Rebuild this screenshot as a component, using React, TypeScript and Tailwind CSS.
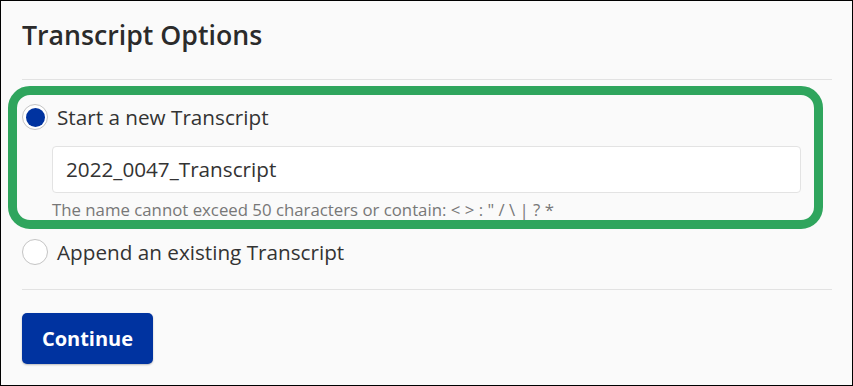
const Radio = ({ checked }: { checked: boolean }) => (
  <span className="flex h-[26px] w-[26px] shrink-0 items-center justify-center rounded-full border border-[#c4c4c4] bg-white">
    {checked && <span className="h-[19px] w-[19px] rounded-full bg-[#0033a0]" />}
  </span>
);

export default function App() {
  return (
    <div
      className="relative h-[386px] w-[853px] border border-black bg-[#fafafa] px-[21px] text-[#333]"
      style={{ fontFamily: '"Open Sans", "Noto Sans", sans-serif' }}
    >
      <h1 className="pt-[16px] text-[26.7px] font-semibold leading-[36px] text-[#2b2b2b]">Transcript Options</h1>
      <div className="mt-[26px] h-px w-[810px] bg-[#e2e2e2]" />

      <label className="mt-[24px] flex h-[26px] items-center gap-[9px]">
        <Radio checked />
        <span className="text-[20.7px] leading-[26px]">Start a new Transcript</span>
      </label>
      <div className="ml-[30px] mt-[16px] flex h-[47px] w-[749px] items-center rounded-[4px] border border-[#e3e3e3] bg-white px-[13px] text-[20.7px]">
        2022_0047_Transcript
      </div>
      <p className="ml-[30px] mt-[7px] text-[16.8px] leading-[20px] text-[#777]">
        The name cannot exceed 50 characters or contain: &lt; &gt; : " / \ | ? *
      </p>

      <label className="mt-[19px] flex h-[26px] items-center gap-[9px]">
        <Radio checked={false} />
        <span className="text-[20.7px] leading-[26px]">Append an existing Transcript</span>
      </label>
      <div className="mt-[24px] h-px w-[810px] bg-[#e2e2e2]" />

      <button className="mt-[23px] flex h-[51px] w-[131px] items-center justify-center rounded-[5px] bg-[#0033a0] text-[20px] font-bold text-white shadow-[0_1px_2px_rgba(0,0,0,0.25)]">
        Continue
      </button>

      <div className="pointer-events-none absolute left-[7px] top-[85px] h-[143px] w-[815px] rounded-[22px] border-[9px] border-[#2fa55d]" />
    </div>
  );
}
